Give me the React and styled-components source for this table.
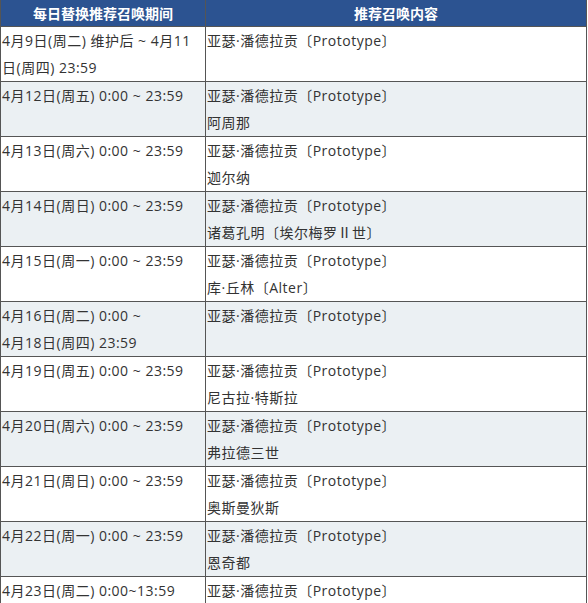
import React from "react";
import styled, { createGlobalStyle } from "styled-components";

const GlobalStyle = createGlobalStyle`
    html, body {
        margin: 0;
        padding: 0;
        background: #fff;
        overflow: hidden;
    }
    body {
        font-family: "Open Sans", "Noto Sans CJK SC", sans-serif;
    }
`;

const rows = [
    { period: "4月9日(周二) 维护后 ~ 4月11日(周四) 23:59", servants: ["亚瑟·潘德拉贡〔Prototype〕"] },
    { period: "4月12日(周五) 0:00 ~ 23:59", servants: ["亚瑟·潘德拉贡〔Prototype〕", "阿周那"] },
    { period: "4月13日(周六) 0:00 ~ 23:59", servants: ["亚瑟·潘德拉贡〔Prototype〕", "迦尔纳"] },
    { period: "4月14日(周日) 0:00 ~ 23:59", servants: ["亚瑟·潘德拉贡〔Prototype〕", "诸葛孔明〔埃尔梅罗Ⅱ世〕"] },
    { period: "4月15日(周一) 0:00 ~ 23:59", servants: ["亚瑟·潘德拉贡〔Prototype〕", "库·丘林〔Alter〕"] },
    { period: "4月16日(周二) 0:00 ~\n4月18日(周四) 23:59", servants: ["亚瑟·潘德拉贡〔Prototype〕"] },
    { period: "4月19日(周五) 0:00 ~ 23:59", servants: ["亚瑟·潘德拉贡〔Prototype〕", "尼古拉·特斯拉"] },
    { period: "4月20日(周六) 0:00 ~ 23:59", servants: ["亚瑟·潘德拉贡〔Prototype〕", "弗拉德三世"] },
    { period: "4月21日(周日) 0:00 ~ 23:59", servants: ["亚瑟·潘德拉贡〔Prototype〕", "奥斯曼狄斯"] },
    { period: "4月22日(周一) 0:00 ~ 23:59", servants: ["亚瑟·潘德拉贡〔Prototype〕", "恩奇都"] },
    { period: "4月23日(周二) 0:00~13:59", servants: ["亚瑟·潘德拉贡〔Prototype〕"] },
];

const App = () => {
    return (
        <>
            <GlobalStyle />
            <Table>
                <colgroup>
                    <col style={{ width: 205 }} />
                    <col />
                </colgroup>
                <thead>
                    <tr>
                        <Th>每日替换推荐召唤期间</Th>
                        <Th>推荐召唤内容</Th>
                    </tr>
                </thead>
                <tbody>
                    {rows.map((row, i) => (
                        <Row key={i} $alt={i % 2 === 1}>
                            <PeriodTd>{row.period}</PeriodTd>
                            <Td>
                                {row.servants.map((s) => (
                                    <Line key={s}>{s}</Line>
                                ))}
                            </Td>
                        </Row>
                    ))}
                </tbody>
            </Table>
        </>
    );
};

export default App;

const Table = styled.table`
    width: 587px;
    border-collapse: collapse;
    table-layout: fixed;
    font-size: 14px;
    color: #333;
`;

const Th = styled.th`
    background: #2c5391;
    color: #fff;
    font-family: "Noto Sans CJK SC", sans-serif;
    font-size: 14px;
    font-weight: bold;
    height: 26px;
    padding: 0;
    line-height: 26px;
    border: 1px solid #555;
    border-top: none;
    text-align: center;
`;

const Row = styled.tr`
    background: ${(p) => (p.$alt ? "#ebf0f3" : "#fff")};
`;

const Td = styled.td`
    border: 1px solid #555;
    padding: 0 0 0 1px;
    height: 54px;
    line-height: 27px;
    letter-spacing: 0.5px;
    vertical-align: top;
    word-break: break-all;
`;

const PeriodTd = styled(Td)`
    white-space: pre-line;
`;

const Line = styled.div`
    height: 27px;
    white-space: nowrap;
`;
